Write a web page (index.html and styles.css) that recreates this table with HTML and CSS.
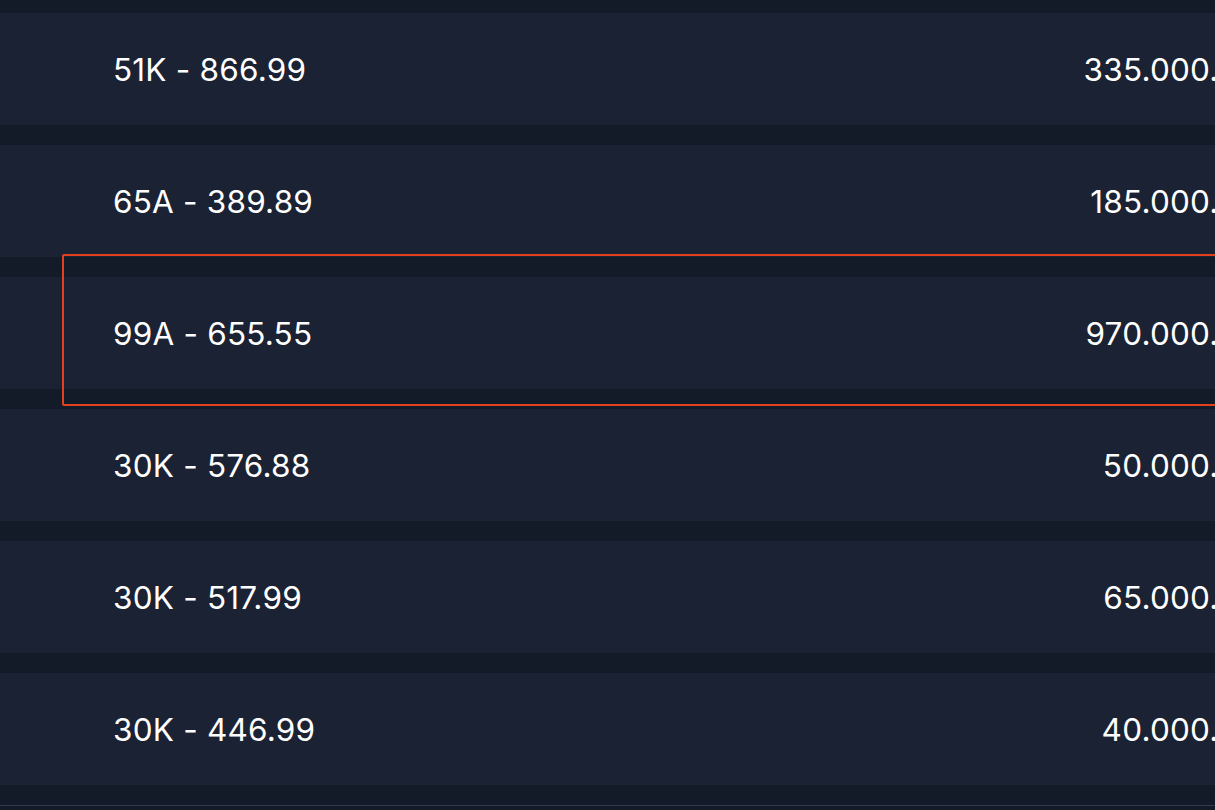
FILE: index.html
```html
<!DOCTYPE html>
<html>
<head>
<meta charset="utf-8">
<link rel="stylesheet" href="styles.css">
</head>
<body>
<div class="table">
  <div class="row"><span class="code">51K - 866.99</span><span class="price">335.000.000</span></div>
  <div class="row"><span class="code">65A - 389.89</span><span class="price">185.000.000</span></div>
  <div class="row"><span class="code">99A - 655.55</span><span class="price">970.000.000</span></div>
  <div class="row"><span class="code">30K - 576.88</span><span class="price">50.000.000</span></div>
  <div class="row"><span class="code">30K - 517.99</span><span class="price">65.000.000</span></div>
  <div class="row"><span class="code">30K - 446.99</span><span class="price">40.000.000</span></div>
</div>
<div class="rule"></div>
<div class="highlight"></div>
</body>
</html>
```
FILE: styles.css
```css
html, body {
  margin: 0;
  padding: 0;
  background: #131a28;
  overflow: hidden;
  width: 1215px;
  height: 810px;
}
body {
  position: relative;
  font-family: "Inter", "Noto Sans", sans-serif;
  color: #ffffff;
}
.table {
  display: flex;
  flex-direction: column;
  gap: 20px;
  padding-top: 13px;
  width: 1400px;
}
.row {
  height: 112px;
  background: #1b2233;
  display: flex;
  align-items: center;
  justify-content: space-between;
  padding-left: 113px;
  padding-right: 122px;
  font-size: 31.5px;
  letter-spacing: 0.2px;
}
.rule {
  margin-top: 20px;
  height: 1px;
  background: #2f3b4f;
}
.highlight {
  position: absolute;
  left: 62px;
  top: 254px;
  width: 1200px;
  height: 148px;
  border: 2px solid #e2401e;
  border-radius: 2px;
}
```
